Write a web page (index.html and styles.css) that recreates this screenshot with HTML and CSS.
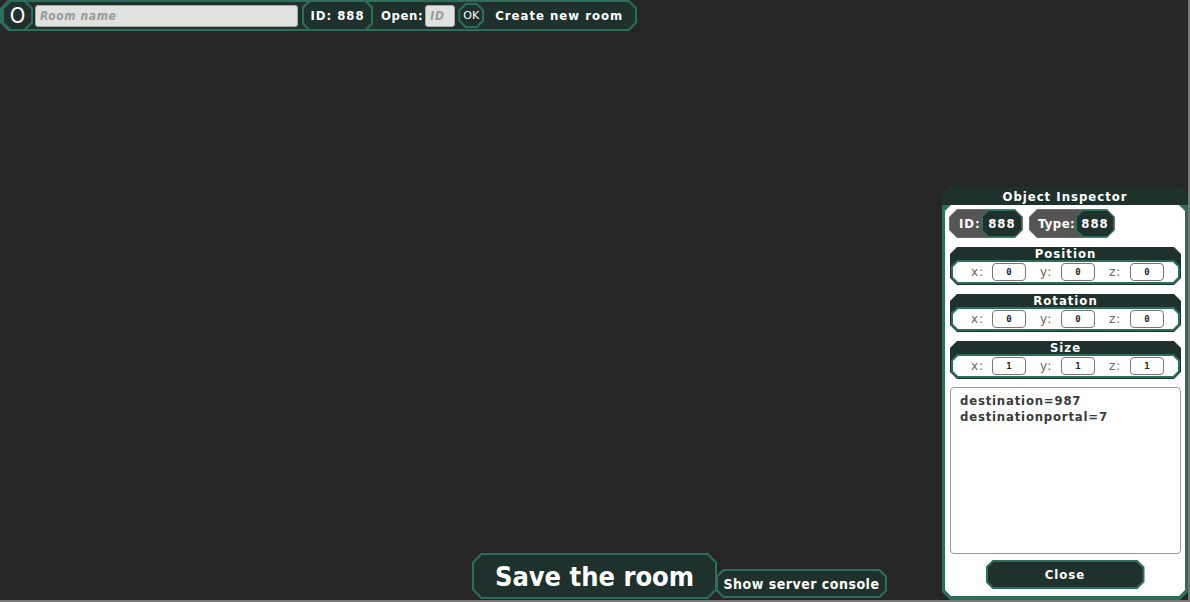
FILE: index.html
```html
<!DOCTYPE html>
<html>
<head>
<meta charset="utf-8">
<link rel="stylesheet" href="styles.css">
</head>
<body>
<div class="stage">
  <div class="topbar oct bo">
    <div class="topbar-in oct fill">
      <div class="obtn oct bo"><div class="oct fill obtn-in">O</div></div>
      <input class="field room" placeholder="Room name">
      <div class="idchip oct bo"><div class="oct fill">ID: 888</div></div>
      <span class="lbl open">Open:</span>
      <input class="field idf" placeholder="ID">
      <div class="ok oct bo"><div class="oct fill">OK</div></div>
      <span class="lbl create">Create new room</span>
    </div>
  </div>
  <div class="lower">
    <div class="bottom-bar">
      <div class="save oct bo"><div class="oct fill">Save the room</div></div>
      <div class="console oct bo"><div class="oct fill">Show server console</div></div>
    </div>
    <aside class="inspector oct">
      <div class="insp-title">Object Inspector</div>
      <div class="insp-body oct">
        <div class="chips">
          <div class="chip oct"><div class="chip-in oct"><span class="chip-lbl">ID:</span><div class="chip-val oct bo"><div class="oct fill">888</div></div></div></div>
          <div class="chip oct"><div class="chip-in oct"><span class="chip-lbl">Type:</span><div class="chip-val oct bo"><div class="oct fill">888</div></div></div></div>
        </div>
        <div class="grp oct">
          <div class="grp-title">Position</div>
          <div class="grp-body oct"><div class="grp-row oct">
            <span class="axis">x:</span><input class="num" value="0">
            <span class="axis">y:</span><input class="num" value="0">
            <span class="axis">z:</span><input class="num" value="0">
          </div></div>
        </div>
        <div class="grp oct">
          <div class="grp-title">Rotation</div>
          <div class="grp-body oct"><div class="grp-row oct">
            <span class="axis">x:</span><input class="num" value="0">
            <span class="axis">y:</span><input class="num" value="0">
            <span class="axis">z:</span><input class="num" value="0">
          </div></div>
        </div>
        <div class="grp oct">
          <div class="grp-title">Size</div>
          <div class="grp-body oct"><div class="grp-row oct">
            <span class="axis">x:</span><input class="num" value="1">
            <span class="axis">y:</span><input class="num" value="1">
            <span class="axis">z:</span><input class="num" value="1">
          </div></div>
        </div>
        <textarea class="props">destination=987
destinationportal=7</textarea>
        <div class="close oct bo"><div class="oct fill">Close</div></div>
      </div>
    </aside>
  </div>
</div>
</body>
</html>
```

FILE: styles.css
```css
* { box-sizing: border-box; }
html, body { margin: 0; padding: 0; background: #262626; }
body {
  font-family: "DejaVu Sans Condensed", "DejaVu Sans", sans-serif;
  font-weight: bold;
  color: #fff;
  letter-spacing: 1px;
}
.stage {
  width: 1190px;
  height: 602px;
  border-right: 2px solid #777;
  border-bottom: 2px solid #777;
  background: #262626;
  display: flex;
  flex-direction: column;
  overflow: hidden;
}
.oct {
  --c: 7px;
  clip-path: polygon(var(--c) 0, calc(100% - var(--c)) 0, 100% var(--c), 100% calc(100% - var(--c)), calc(100% - var(--c)) 100%, var(--c) 100%, 0 calc(100% - var(--c)), 0 var(--c));
}
.bo { background: #2c6e5b; padding: 2px; }
.fill {
  --c: 6px;
  background: #1e312c;
  height: 100%;
  display: flex;
  align-items: center;
  justify-content: center;
}

/* top bar */
.topbar { align-self: flex-start; height: 31px; --c: 8px; }
.topbar-in {
  --c: 7px;
  justify-content: flex-start;
  padding-right: 12px;
}
.obtn { height: 31px; width: 31px; margin: -2px 0 -2px 0; --c: 8px; }
.obtn-in {
  font-family: "DejaVu Sans Condensed", "DejaVu Sans", sans-serif;
  font-weight: normal;
  font-size: 22px;
  letter-spacing: 0;
  --c: 7px;
}
.field {
  height: 22px;
  background: #e0e2e0;
  border: 1px solid #a8aaa8;
  border-radius: 3px;
  font-family: "DejaVu Sans Condensed", "DejaVu Sans", sans-serif;
  font-weight: bold;
  font-style: italic;
  font-size: 12px;
  letter-spacing: 0.6px;
  padding: 0 4px;
  outline: none;
}
.field::placeholder { color: #9a9c9a; }
.room { width: 263px; margin-left: 2px; }
.idchip { height: 31px; width: 71px; margin: -2px 0 -2px 4px; font-size: 13px; }
.lbl { font-size: 13px; }
.open { margin-left: 8px; letter-spacing: 0.6px; }
.idf { width: 30px; margin-left: 2px; }
.ok { width: 26px; height: 25px; margin-left: 3px; --c: 7px; }
.ok .fill { font-family: "DejaVu Sans", sans-serif; font-weight: normal; font-size: 11px; letter-spacing: 0; --c: 6px; }
.create { margin-left: 11px; }

/* lower area */
.lower {
  flex: 1;
  display: flex;
  align-items: flex-end;
}
.bottom-bar {
  display: flex;
  align-items: flex-end;
  margin-left: 472px;
  margin-bottom: 2px;
}
.save { width: 245px; height: 46px; --c: 9px; font-size: 27px; letter-spacing: 0; margin-bottom: -1px; }
.save .fill { --c: 8px; }
.console { width: 171px; height: 29px; font-size: 14px; letter-spacing: 0.5px; margin-left: -1px; }
.console .fill { padding-top: 1px; }

/* inspector */
.inspector {
  margin-left: auto;
  width: 246px;
  height: 413px;
  background: #2c6e5b;
  --c: 8px;
  padding: 0 3px 4px;
  display: flex;
  flex-direction: column;
}
.insp-title {
  background: #1e312c;
  height: 18px;
  margin: 0 -3px;
  text-align: center;
  font-size: 13px;
  line-height: 18px;
  padding-top: 1px;
}
.insp-body {
  flex: 1;
  background: #fff;
  --c: 6px;
  padding: 4px 4px 0 4px;
  display: flex;
  flex-direction: column;
}
.chips { display: flex; gap: 6px; height: 29px; }
.chip { background: #6c6c6c; padding: 1px; --c: 8px; height: 29px; }
.chip-in {
  background: #555;
  --c: 7px;
  height: 100%;
  display: flex;
  align-items: center;
}
.chip:first-child { width: 74px; }
.chip:last-child { width: 86px; }
.chip-lbl { font-size: 13px; padding-left: 9px; flex: 1; }
.chip:last-child .chip-lbl { padding-left: 8px; letter-spacing: 0.4px; }
.chip-val { height: 29px; margin: -1px -1px -1px 0; width: 43px; --c: 8px; font-size: 13px; }
.chip:first-child .chip-val { width: 43px; }
.chip:last-child .chip-val { width: 42px; }

.grp {
  margin-top: 9px;
  margin-left: 1px;
  background: #1e312c;
  height: 38px;
  --c: 7px;
  padding: 0 1px 1px;
  display: flex;
  flex-direction: column;
}
.grp-title {
  height: 13px;
  font-size: 13px;
  line-height: 14px;
  text-align: center;
}
.grp-body { flex: 1; background: #2c6e5b; padding: 2px; --c: 6px; }
.grp-row {
  background: #fff;
  height: 100%;
  --c: 5px;
  display: flex;
  align-items: center;
  padding-left: 18px;
}
.axis {
  width: 23px;
  font-family: "DejaVu Sans", sans-serif;
  font-weight: normal;
  font-size: 12px;
  color: #666;
  letter-spacing: 1px;
}
.num {
  width: 34px;
  height: 18px;
  border: 1px solid #777;
  border-radius: 4px;
  background: #fff;
  margin-right: 14px;
  text-align: center;
  font-family: "DejaVu Sans Mono", monospace;
  font-weight: bold;
  font-size: 9px;
  letter-spacing: 0;
  color: #222;
  padding: 0;
  outline: none;
}
.props {
  margin-top: 8px;
  margin-left: 1px;
  height: 167px;
  width: 231px;
  resize: none;
  border: 1px solid #999;
  border-radius: 4px;
  font-family: "DejaVu Sans Condensed", "DejaVu Sans", sans-serif;
  font-weight: bold;
  font-size: 13px;
  letter-spacing: 0.8px;
  line-height: 16px;
  color: #3a3a3a;
  padding: 5px 9px;
  outline: none;
}
.close {
  margin: 6px auto 0;
  width: 159px;
  height: 29px;
  font-size: 13px;
}
```
